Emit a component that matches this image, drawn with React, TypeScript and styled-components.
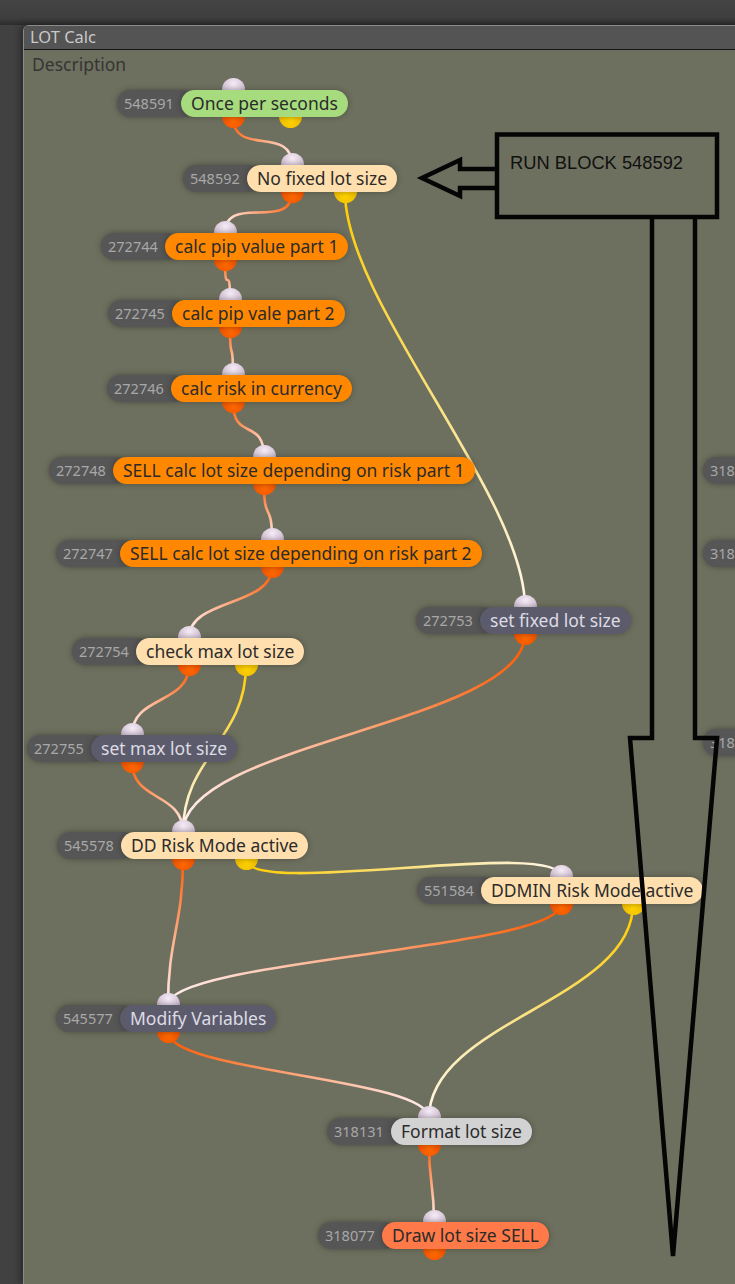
import React from 'react';
import styled, { createGlobalStyle, css } from 'styled-components';

// canvas origin in page coordinates
const OX = 24;
const OY = 50;

type Tone = 'green' | 'cream' | 'orange' | 'slate' | 'silver' | 'coral';
type PortKind = 'in' | 'out' | 'alt';

interface INode {
  id: string;
  label: string;
  x: number;
  y: number;
  tone: Tone;
  ins: number[];
  outs: number[];
  alts: number[];
}

interface IWire {
  from: [number, number];
  to: [number, number];
  kind: 'out' | 'alt';
}

const nodes: INode[] = [
  { id: '548591', label: 'Once per seconds', x: 117, y: 103, tone: 'green', ins: [233], outs: [233], alts: [290] },
  { id: '548592', label: 'No fixed lot size', x: 183, y: 178, tone: 'cream', ins: [292], outs: [292], alts: [345] },
  { id: '272744', label: 'calc pip value part 1', x: 101, y: 246, tone: 'orange', ins: [225], outs: [225], alts: [] },
  { id: '272745', label: 'calc pip vale part 2', x: 108, y: 313, tone: 'orange', ins: [230], outs: [230], alts: [] },
  { id: '272746', label: 'calc risk in currency', x: 107, y: 388, tone: 'orange', ins: [233], outs: [233], alts: [] },
  { id: '272748', label: 'SELL calc lot size depending on risk part 1', x: 49, y: 470, tone: 'orange', ins: [264], outs: [264], alts: [] },
  { id: '272747', label: 'SELL calc lot size depending on risk part 2', x: 56, y: 553, tone: 'orange', ins: [272], outs: [272], alts: [] },
  { id: '272753', label: 'set fixed lot size', x: 416, y: 620, tone: 'slate', ins: [525], outs: [525], alts: [] },
  { id: '272754', label: 'check max lot size', x: 72, y: 651, tone: 'cream', ins: [189], outs: [189], alts: [246] },
  { id: '272755', label: 'set max lot size', x: 27, y: 748, tone: 'slate', ins: [132], outs: [132], alts: [] },
  { id: '545578', label: 'DD Risk Mode active', x: 57, y: 845, tone: 'cream', ins: [183], outs: [183], alts: [246] },
  { id: '551584', label: 'DDMIN Risk Mode active', x: 417, y: 890, tone: 'cream', ins: [561], outs: [561], alts: [633] },
  { id: '545577', label: 'Modify Variables', x: 56, y: 1018, tone: 'slate', ins: [168], outs: [168], alts: [] },
  { id: '318131', label: 'Format lot size', x: 327, y: 1131, tone: 'silver', ins: [429], outs: [429], alts: [] },
  { id: '318077', label: 'Draw lot size SELL', x: 318, y: 1235, tone: 'coral', ins: [434], outs: [434], alts: [] },
];

// nodes of the next column, cut off by the window edge
const edgeNodes = [
  { id: '318', y: 470 },
  { id: '318', y: 553 },
  { id: '318', y: 742 },
];

const wires: IWire[] = [
  { from: [233, 117], to: [292, 165], kind: 'out' },
  { from: [292, 192], to: [225, 233], kind: 'out' },
  { from: [345, 192], to: [525, 607], kind: 'alt' },
  { from: [225, 260], to: [230, 300], kind: 'out' },
  { from: [230, 327], to: [233, 375], kind: 'out' },
  { from: [233, 402], to: [264, 457], kind: 'out' },
  { from: [264, 484], to: [272, 540], kind: 'out' },
  { from: [272, 567], to: [189, 638], kind: 'out' },
  { from: [189, 665], to: [132, 735], kind: 'out' },
  { from: [246, 665], to: [183, 832], kind: 'alt' },
  { from: [132, 762], to: [183, 832], kind: 'out' },
  { from: [525, 634], to: [183, 832], kind: 'out' },
  { from: [183, 859], to: [168, 1005], kind: 'out' },
  { from: [246, 859], to: [561, 877], kind: 'alt' },
  { from: [561, 904], to: [168, 1005], kind: 'out' },
  { from: [633, 904], to: [429, 1118], kind: 'alt' },
  { from: [168, 1032], to: [429, 1118], kind: 'out' },
  { from: [429, 1145], to: [434, 1222], kind: 'out' },
];

const tones: Record<Tone, { bg: string; fg: string }> = {
  green: { bg: '#a6dc7e', fg: '#2b2b2b' },
  cream: { bg: '#ffdfae', fg: '#2b2b2b' },
  orange: { bg: '#ff8800', fg: '#2b2b2b' },
  slate: { bg: '#5c5b6c', fg: '#dcdce4' },
  silver: { bg: '#d2d2d2', fg: '#2b2b2b' },
  coral: { bg: '#ff7a48', fg: '#2b2b2b' },
};

function wirePath([x1, y1]: [number, number], [x2, y2]: [number, number]) {
  const d = Math.min(110, Math.max(40, Math.abs(y2 - y1) * 0.45));
  return `M ${x1} ${y1} C ${x1} ${y1 + d}, ${x2} ${y2 - d}, ${x2} ${y2}`;
}

function App() {
  return (
    <>
      <GlobalStyle />
      <Desktop>
        <Window>
          <TitleBar>LOT Calc</TitleBar>
          <Canvas>
            <Description>Description</Description>

            <WireLayer>
              <defs>
                {wires.map((w, i) => (
                  <linearGradient
                    key={i}
                    id={`w${i}`}
                    gradientUnits='userSpaceOnUse'
                    x1={w.from[0]}
                    y1={w.from[1]}
                    x2={w.to[0]}
                    y2={w.to[1]}
                  >
                    <stop offset='0' stopColor={w.kind === 'out' ? '#ff5a00' : '#ffcc00'} />
                    <stop offset='0.55' stopColor={w.kind === 'out' ? '#ffb08a' : '#fbe38a'} />
                    <stop offset='1' stopColor={w.kind === 'out' ? '#fff0f2' : '#fff6e6'} />
                  </linearGradient>
                ))}
              </defs>
              <g transform={`translate(${-OX} ${-OY})`}>
                {wires.map((w, i) => (
                  <path key={i} d={wirePath(w.from, w.to)} stroke={`url(#w${i})`} strokeWidth={2.6} fill='none' />
                ))}
              </g>
            </WireLayer>

            {nodes.map((n) => (
              <React.Fragment key={n.id}>
                {n.ins.map((x) => <Port key={'i' + x} $kind='in' $x={x - OX} $y={n.y - 13.5 - OY} />)}
                {n.outs.map((x) => <Port key={'o' + x} $kind='out' $x={x - OX} $y={n.y + 13.5 - OY} />)}
                {n.alts.map((x) => <Port key={'a' + x} $kind='alt' $x={x - OX} $y={n.y + 13.5 - OY} />)}
                <NodeBox $x={n.x - OX} $y={n.y - 13.5 - OY}>
                  <IdTag>{n.id}</IdTag>
                  <Label $tone={n.tone}>{n.label}</Label>
                </NodeBox>
              </React.Fragment>
            ))}

            {edgeNodes.map((n) => (
              <NodeBox key={n.y} $x={703 - OX} $y={n.y - 13.5 - OY}>
                <IdTag>{n.id}</IdTag>
              </NodeBox>
            ))}

            <Annotation>
              <g transform={`translate(${-OX} ${-OY})`} fill='none' stroke='#050505' strokeWidth={4.5} strokeLinejoin='miter'>
                <rect x={497} y={134.5} width={220} height={82.5} />
                <polyline points='497,169 460,169 460,160 422,178 460,196 460,188 497,188' />
                <polyline points='652,219 652,738 630,738 673,1256 717,738 695,738 695,219' />
                <text
                  x={510}
                  y={169}
                  fill='#111'
                  stroke='none'
                  fontSize={18.5}
                  fontFamily='"Liberation Sans", Arial, sans-serif'
                  textLength={173}
                  lengthAdjust='spacingAndGlyphs'
                >
                  RUN BLOCK 548592
                </text>
              </g>
            </Annotation>
          </Canvas>
        </Window>
      </Desktop>
    </>
  );
}

export default App;

const GlobalStyle = createGlobalStyle`
  html, body {
    margin: 0;
    padding: 0;
    width: 735px;
    height: 1284px;
    overflow: hidden;
    background: #414141;
  }

  body {
    font-family: "Noto Sans", "Open Sans", sans-serif;
  }
`;

const Desktop = styled.div`
  width: 735px;
  height: 1284px;
  padding: 25px 0 0 23px;
  box-sizing: border-box;
  background: linear-gradient(to bottom, #444 0px, #3e3e3e 18px, #2c2c2c 25px, #414141 25px);
  overflow: hidden;
`;

const Window = styled.div`
  display: flex;
  flex-direction: column;
  width: 820px;
  height: 1259px;
  border-left: 1px solid #8b8b8b;
  border-top-left-radius: 6px;
  box-shadow: -3px 0 6px rgba(0, 0, 0, 0.35);
  overflow: hidden;
`;

const TitleBar = styled.div`
  height: 23px;
  flex-shrink: 0;
  background-color: #545454;
  border-top: 1px solid #8b8b8b;
  border-bottom: 1px solid #141414;
  color: #c9c9c9;
  font-size: 16.5px;
  line-height: 22px;
  padding-left: 6px;
`;

const Canvas = styled.div`
  position: relative;
  flex: 1;
  background-color: #6e705f;
`;

const Description = styled.div`
  padding: 2px 0 0 8px;
  color: #353535;
  font-size: 17.5px;
  line-height: 24px;
`;

const WireLayer = styled.svg`
  position: absolute;
  inset: 0;
  width: 100%;
  height: 100%;
  z-index: 0;
`;

const Annotation = styled.svg`
  position: absolute;
  inset: 0;
  width: 100%;
  height: 100%;
  z-index: 5;
  pointer-events: none;
`;

const portColors = {
  in: css`background: radial-gradient(circle at 50% 25%, #f6ecf6 0%, #d8c8da 45%, #9a8aa2 100%);`,
  out: css`background: radial-gradient(circle at 50% 70%, #ff6a00 0%, #f05400 55%, #c84400 100%);`,
  alt: css`background: radial-gradient(circle at 50% 70%, #ffd400 0%, #f0bc00 55%, #c89a00 100%);`,
};

const Port = styled.span<{ $kind: PortKind; $x: number; $y: number }>`
  position: absolute;
  left: ${(p) => p.$x - 11.5}px;
  top: ${(p) => p.$y - 11.5}px;
  width: 23px;
  height: 23px;
  border-radius: 50%;
  z-index: 1;
  ${(p) => portColors[p.$kind]}
`;

const NodeBox = styled.div<{ $x: number; $y: number }>`
  position: absolute;
  left: ${(p) => p.$x}px;
  top: ${(p) => p.$y}px;
  display: flex;
  align-items: center;
  height: 27px;
  z-index: 2;
  white-space: nowrap;
`;

const IdTag = styled.span`
  box-sizing: border-box;
  width: 78px;
  height: 27px;
  margin-right: -14px;
  padding-left: 7px;
  border-radius: 14px;
  background-color: #565656;
  color: #a8a8a8;
  font-size: 14.5px;
  line-height: 27px;
  box-shadow: 0 0 6px rgba(0, 0, 0, 0.35);
`;

const Label = styled.span<{ $tone: Tone }>`
  position: relative;
  height: 27px;
  padding: 0 10px;
  border-radius: 14px;
  background-color: ${(p) => tones[p.$tone].bg};
  color: ${(p) => tones[p.$tone].fg};
  font-size: 17.5px;
  line-height: 27px;
  box-shadow: 0 0 6px rgba(0, 0, 0, 0.3);
`;
